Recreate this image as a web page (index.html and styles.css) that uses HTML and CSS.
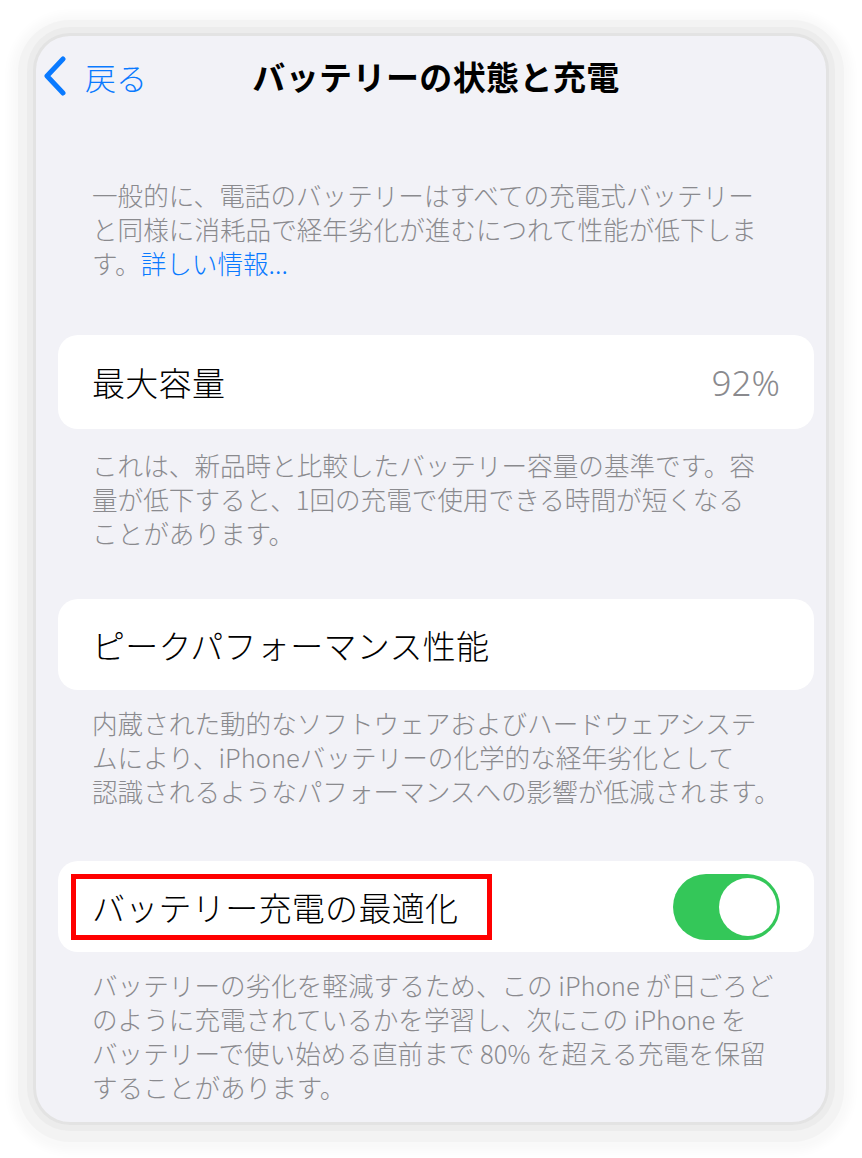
FILE: index.html
```html
<!DOCTYPE html>
<html lang="ja">
  <head>
    <meta charset="UTF-8" />
    <meta name="viewport" content="width=device-width, initial-scale=1.0" />
    <title>バッテリーの状態と充電</title>
    <link rel="stylesheet" href="styles.css">
  </head>
  <body>
    <!-- Phone screen -->
    <div class="screen">
      <!-- Navigation bar -->
      <header class="nav">
        <a class="back" href="#">
          <svg class="chevron" width="25" height="40" viewBox="0 0 25 40">
            <path d="M21 3 L5 20 L21 37" fill="none" stroke="#0a7aff" stroke-width="5" stroke-linecap="round" stroke-linejoin="round" />
          </svg>
          <span>戻る</span>
        </a>
        <h1>バッテリーの状態と充電</h1>
        <span></span>
      </header>

      <p class="note intro">
        一般的に、電話のバッテリーはすべての充電式バッテリー<br>
        と同様に消耗品で経年劣化が進むにつれて性能が低下しま<br>
        す。<a href="#">詳しい情報...</a>
      </p>

      <!-- Maximum capacity -->
      <section class="group group-capacity">
        <div class="card">
          <span class="label">最大容量</span>
          <span class="value">92%</span>
        </div>
        <p class="note">
          これは、新品時と比較したバッテリー容量の基準です。容<br>
          量が低下すると、1回の充電で使用できる時間が短くなる<br>
          ことがあります。
        </p>
      </section>

      <!-- Peak performance -->
      <section class="group group-peak">
        <div class="card">
          <span class="label">ピークパフォーマンス性能</span>
        </div>
        <p class="note">
          内蔵された動的なソフトウェアおよびハードウェアシステ<br>
          ムにより、iPhoneバッテリーの化学的な経年劣化として<br>
          認識されるようなパフォーマンスへの影響が低減されます。
        </p>
      </section>

      <!-- Optimized charging -->
      <section class="group group-optimize">
        <div class="card">
          <span class="label">バッテリー充電の最適化</span>
          <span class="toggle on"><span class="knob"></span></span>
          <span class="highlight"></span>
        </div>
        <p class="note">
          バッテリーの劣化を軽減するため、この iPhone が日ごろど<br>
          のように充電されているかを学習し、次にこの iPhone を<br>
          バッテリーで使い始める直前まで 80% を超える充電を保留<br>
          することがあります。
        </p>
      </section>
    </div>
  </body>
</html>
```

FILE: styles.css
```css
/* Global Styles */
* {
  box-sizing: border-box;
}
body {
  margin: 0;
  width: 862px;
  height: 1158px;
  background: #fff;
  font-family: "Noto Sans CJK JP", "Noto Sans", sans-serif;
  color: #000;
  overflow: hidden;
}

/* Screen frame */
.screen {
  margin: 36px 0 0 36px;
  width: 790px;
  height: 1086px;
  padding: 0 12px 0 22px;
  background: #f2f2f7;
  border-radius: 34px;
  overflow: hidden;
  box-shadow: 0 0 0 3px #e3e3e3, 0 0 0 9px #ececec, 0 2px 0 18px #f3f3f3,
    0 4px 10px 26px #f9f9f9;
}

/* Navigation */
.nav {
  height: 80px;
  display: grid;
  grid-template-columns: 1fr auto 1fr;
  align-items: center;
}
.nav h1 {
  margin: 0;
  font-size: 33px;
  font-weight: 700;
  letter-spacing: 0.4px;
}
.back {
  display: flex;
  align-items: center;
  gap: 18px;
  margin-left: -16px;
  color: #0a7aff;
  text-decoration: none;
  font-size: 31px;
  font-weight: 300;
}
.chevron {
  display: block;
}

/* Footnote text */
.note {
  margin: 0;
  padding: 0 20px 0 34px;
  font-size: 25.6px;
  font-weight: 300;
  line-height: 34px;
  color: #8a8a8e;
  white-space: nowrap;
}
.note a {
  color: #0a7aff;
  text-decoration: none;
}
.intro {
  margin-top: 62px;
}

/* Groups */
.group-capacity {
  margin-top: 55px;
}
.group-capacity .note {
  margin-top: 19px;
}
.group-peak {
  margin-top: 49px;
}
.group-optimize {
  margin-top: 53px;
}
.group-peak .note,
.group-optimize .note {
  margin-top: 16px;
}

/* Cards */
.card {
  position: relative;
  height: 91px;
  padding: 0 34px;
  background: #fff;
  border-radius: 20px;
  display: flex;
  align-items: center;
  justify-content: space-between;
}
.group-capacity .card {
  height: 94px;
}
.label {
  font-size: 33px;
  font-weight: 300;
  letter-spacing: 0.3px;
}
.value {
  font-family: "Noto Sans", sans-serif;
  font-size: 35px;
  font-weight: 300;
  color: #8a8a8e;
}

/* Toggle switch */
.toggle {
  position: relative;
  width: 107px;
  height: 66px;
  border-radius: 33px;
  background: #e9e9ea;
}
.toggle.on {
  background: #34c759;
}
.knob {
  position: absolute;
  top: 4px;
  right: 3px;
  width: 58px;
  height: 58px;
  border-radius: 50%;
  background: #fff;
}

/* Red annotation box */
.highlight {
  position: absolute;
  left: 13px;
  top: 13px;
  width: 421px;
  height: 66px;
  border: 5px solid #f00;
  pointer-events: none;
}
```
